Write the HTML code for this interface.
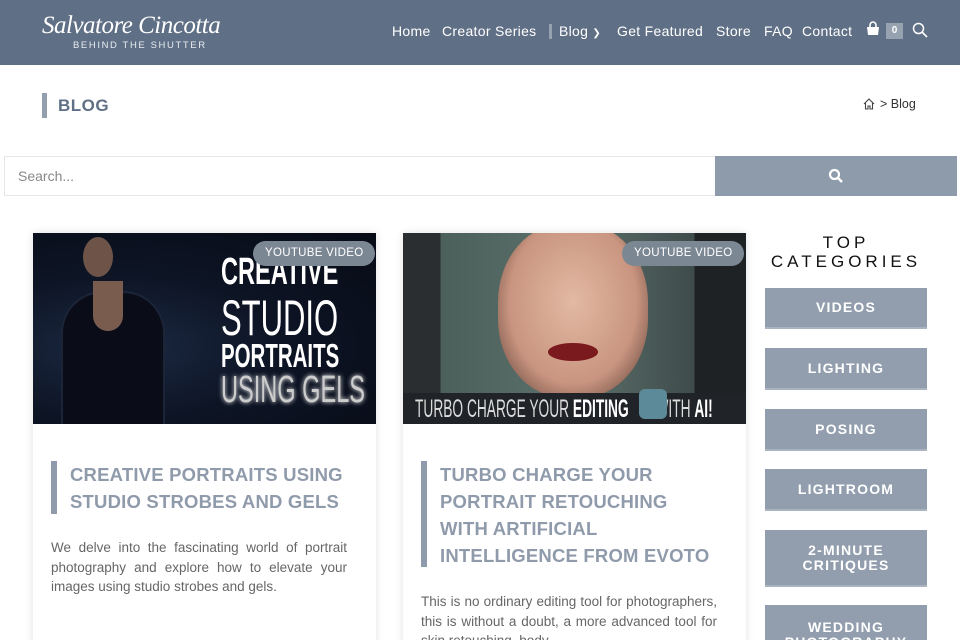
<!DOCTYPE html>
<html><head><meta charset="utf-8"><style>
*{margin:0;padding:0;box-sizing:border-box}
html,body{width:960px;height:640px;overflow:hidden}
body{background:#fff;font-family:"Liberation Sans",sans-serif;position:relative}
.hdr{position:absolute;left:0;top:0;width:960px;height:65px;background:#5f6f85}
.logo{position:absolute;left:42px;top:12px;color:#fff;font-family:"Liberation Serif",serif;font-style:italic;font-size:25px;letter-spacing:-0.5px}
.logo2{position:absolute;left:73px;top:40px;color:#e8ecf1;font-size:9.5px;letter-spacing:1.6px}
.nav{position:absolute;top:23px;color:#fff;font-size:14px;letter-spacing:0.3px}
.abs{position:absolute}
.sbox{position:absolute;left:4px;top:156px;width:712px;height:40px;border:1px solid #e6e6e6;color:#888;font-size:14px;padding:11px 13px}
.sbtn{position:absolute;left:715px;top:156px;width:242px;height:40px;background:#8e9bab}
.card{position:absolute;top:233px;width:343px;height:420px;background:#fff;box-shadow:0 0 8px rgba(0,0,0,.12)}
.img{position:absolute;left:0;top:0;width:343px;height:191px;overflow:hidden}
.tag{position:absolute;top:8px;height:25px;padding:0 12px;line-height:25px;border-radius:13px;background:#7c8794;color:#fff;font-size:11.5px;letter-spacing:.3px}
.bar{position:absolute;width:6px;background:#8f9aab}
.tt{position:absolute;color:#8f9aab;font-weight:bold;font-size:18.5px;line-height:27px;letter-spacing:.2px}
.tx{position:absolute;color:#666;font-size:13.5px;line-height:19.5px;text-align:justify}
.cat{position:absolute;left:765px;width:162px;background:#929eae;color:#fff;font-weight:bold;font-size:14px;letter-spacing:1.2px;text-align:center;display:flex;align-items:center;justify-content:center;line-height:15px;border-bottom:2px solid #aab3c0}
.big{position:absolute;left:188px;color:#fff;font-family:"Liberation Sans Narrow","Liberation Sans",sans-serif;transform:scaleX(.62);transform-origin:left;white-space:nowrap}
</style></head><body>
<div class="hdr">
<div class="logo">Salvatore Cincotta</div>
<div class="logo2">BEHIND THE SHUTTER</div>
<div class="nav" style="left:392px">Home</div>
<div class="nav" style="left:442px">Creator Series</div>
<div class="abs" style="left:549px;top:24px;width:3px;height:15px;background:#97a2b1"></div>
<div class="nav" style="left:559px">Blog <span style="font-size:10px">&#10095;</span></div>
<div class="nav" style="left:617px">Get Featured</div>
<div class="nav" style="left:716px">Store</div>
<div class="nav" style="left:764px">FAQ</div>
<div class="nav" style="left:802px">Contact</div>
<svg class="abs" style="left:865px;top:21px" width="16" height="16" viewBox="0 0 16 16"><path d="M5 6V4a3 3 0 0 1 6 0v2" fill="none" stroke="#fff" stroke-width="1.6"/><path d="M2 6h12l-1 8H3z" fill="#fff"/></svg>
<div class="abs" style="left:886px;top:23px;width:17px;height:16px;background:#97a2b1;color:#fff;font-size:10px;font-weight:bold;text-align:center;line-height:16px">0</div>
<svg class="abs" style="left:912px;top:22px" width="16" height="16" viewBox="0 0 16 16"><circle cx="6.5" cy="6.5" r="5" fill="none" stroke="#fff" stroke-width="1.5"/><path d="M10 10l5 5" stroke="#fff" stroke-width="1.6"/></svg>
</div>
<div class="abs" style="left:42px;top:93px;width:5px;height:25px;background:#939eae"></div>
<div class="abs" style="left:58px;top:96px;color:#5f6f85;font-weight:bold;font-size:17px;letter-spacing:.5px">BLOG</div>
<svg class="abs" style="left:862px;top:97px" width="14" height="14" viewBox="0 0 14 14"><path d="M2 7L7 2l5 5M3.5 6v6h2.5V9h2v3h2.5V6" fill="none" stroke="#444" stroke-width="1.1"/></svg>
<div class="abs" style="left:880px;top:97px;font-size:12.5px;color:#333">&gt; Blog</div>
<div class="sbox">Search...</div>
<div class="sbtn"><svg class="abs" style="left:113px;top:12px" width="16" height="16" viewBox="0 0 16 16"><circle cx="6.5" cy="6.5" r="4.5" fill="none" stroke="#fff" stroke-width="2.2"/><path d="M10 10l4 4" stroke="#fff" stroke-width="2.5"/></svg></div>

<div class="card" style="left:33px">
<div class="img" style="background:radial-gradient(ellipse at 25% 60%,#1c2a44 0,#0d1424 45%,#070b16 100%)">
<div class="abs" style="left:50px;top:4px;width:30px;height:40px;border-radius:50%;background:#6e5448"></div>
<div class="abs" style="left:30px;top:60px;width:100px;height:131px;border-radius:40px 40px 0 0;background:#0a0d18;box-shadow:0 0 0 2px #1c2438"></div>
<div class="abs" style="left:60px;top:48px;width:30px;height:50px;background:#7a5c4f;border-radius:0 0 15px 15px"></div>
<div class="big" style="top:18px;font-size:38px;font-weight:bold">CREATIVE</div>
<div class="big" style="top:56px;font-size:50px">STUDIO</div>
<div class="big" style="top:104px;font-size:33px;font-weight:bold">PORTRAITS</div>
<div class="big" style="top:136px;font-size:38px;color:#ccc;text-shadow:0 0 6px #fff">USING GELS</div>
<div class="tag" style="left:220px">YOUTUBE VIDEO</div>
</div>
<div class="bar" style="left:18px;top:228px;height:53px"></div>
<div class="tt" style="left:37px;top:228px;width:300px">CREATIVE PORTRAITS USING STUDIO STROBES AND GELS</div>
<div class="tx" style="left:18px;top:305px;width:296px">We delve into the fascinating world of portrait photography and explore how to elevate your images using studio strobes and gels.</div>
</div>

<div class="card" style="left:403px">
<div class="img" style="background:linear-gradient(90deg,#2a2e30 0,#2a2e30 11%,#4b605a 11%,#5d716c 50%,#3e4b4a 85%,#1e2224 85%)">
<div class="abs" style="left:95px;top:-10px;width:150px;height:175px;border-radius:45%;background:radial-gradient(ellipse at 50% 45%,#e2b9a2 0,#c99580 60%,#4a2e28 100%)"></div>
<div class="abs" style="left:145px;top:110px;width:50px;height:18px;border-radius:50%;background:#7a1a1e"></div>
<div class="abs" style="left:0;top:160px;width:343px;height:31px;background:#202428"></div>
<div class="abs" style="left:12px;top:162px;color:#ddd;font-size:25px;transform:scaleX(.55);transform-origin:left;white-space:nowrap">TURBO CHARGE YOUR <b style="color:#fff">EDITING</b> &nbsp;&nbsp;&nbsp;&nbsp;&nbsp;&nbsp;WITH <b style="color:#fff">AI!</b></div>
<div class="abs" style="left:236px;top:156px;width:28px;height:30px;border-radius:6px;background:#5d8a98"></div>
<div class="tag" style="left:219px">YOUTUBE VIDEO</div>
</div>
<div class="bar" style="left:18px;top:228px;height:106px"></div>
<div class="tt" style="left:37px;top:228px;width:278px">TURBO CHARGE YOUR PORTRAIT RETOUCHING WITH ARTIFICIAL INTELLIGENCE FROM EVOTO</div>
<div class="tx" style="left:18px;top:359px;width:296px">This is no ordinary editing tool for photographers, this is without a doubt, a more advanced tool for skin retouching, body</div>
</div>

<div class="abs" style="left:765px;top:233px;width:162px;text-align:center;font-size:17px;letter-spacing:4px;line-height:19px;color:#111">TOP<br>CATEGORIES</div>
<div class="cat" style="top:288px;height:41px">VIDEOS</div>
<div class="cat" style="top:348px;height:42px">LIGHTING</div>
<div class="cat" style="top:409px;height:42px">POSING</div>
<div class="cat" style="top:469px;height:42px">LIGHTROOM</div>
<div class="cat" style="top:530px;height:57px">2-MINUTE<br>CRITIQUES</div>
<div class="cat" style="top:605px;height:57px;align-items:flex-start;padding-top:15px">WEDDING<br>PHOTOGRAPHY</div>
</body></html>
